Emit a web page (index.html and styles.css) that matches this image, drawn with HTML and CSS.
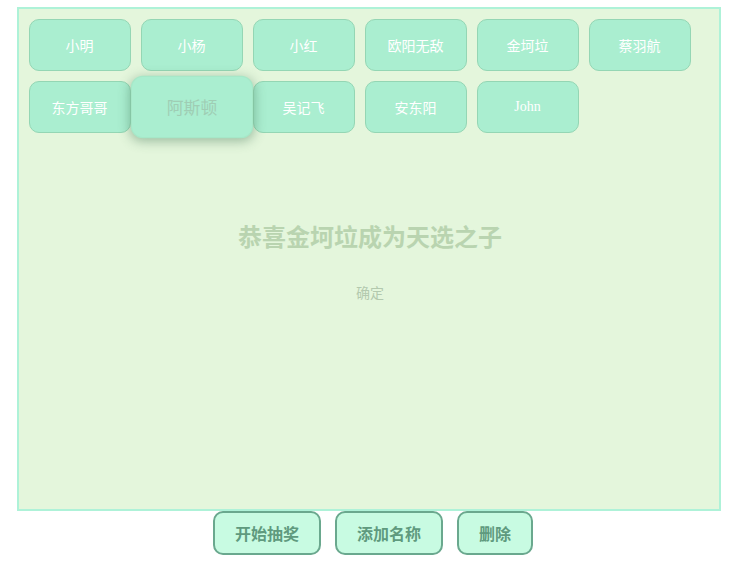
FILE: index.html
```html
<!DOCTYPE html>
<html lang="zh">
<head>
<meta charset="utf-8">
<title>抽奖</title>
<link rel="stylesheet" href="styles.css">
</head>
<body>
<div class="board">
  <div class="names">
    <div class="name">小明</div>
    <div class="name">小杨</div>
    <div class="name">小红</div>
    <div class="name">欧阳无敌</div>
    <div class="name">金坷垃</div>
    <div class="name">蔡羽航</div>
    <div class="name">东方哥哥</div>
    <div class="name active">阿斯顿</div>
    <div class="name">吴记飞</div>
    <div class="name">安东阳</div>
    <div class="name">John</div>
  </div>
  <div class="result">
    <div class="result-title">恭喜金坷垃成为天选之子</div>
    <div class="result-ok">确定</div>
  </div>
</div>
<div class="actions">
  <button class="btn">开始抽奖</button>
  <button class="btn">添加名称</button>
  <button class="btn">删除</button>
</div>
</body>
</html>
```
FILE: styles.css
```css
html, body {
  margin: 0;
  padding: 0;
  background: #ffffff;
  font-family: "Liberation Serif", "Noto Sans CJK SC", serif;
}
body {
  padding-top: 7px;
}
.board {
  margin: 0 auto;
  border: 2px solid #aef2d8;
  background: #e4f6dc;
  padding: 10px;
  box-sizing: border-box;
  width: 704px;
  height: 504px;
}
.names {
  display: flex;
  flex-wrap: wrap;
  gap: 10px;
}
.name {
  width: 102px;
  height: 52px;
  box-sizing: border-box;
  border: 1px solid #94d6b4;
  border-radius: 10px;
  background: #aaeed0;
  color: #ffffff;
  font-size: 14px;
  display: flex;
  align-items: center;
  justify-content: center;
}
.name.active {
  transform: scale(1.2);
  color: #9fcdb4;
  border-color: #a6e8c8;
  box-shadow: 0 2px 10px rgba(60, 110, 80, 0.45);
  position: relative;
  z-index: 1;
}
.result {
  text-align: center;
  margin-top: 86px;
  padding-left: 3px;
}
.result-title {
  font-family: "Noto Sans CJK SC", sans-serif;
  font-weight: bold;
  font-size: 24px;
  line-height: 34px;
  color: #b9d4b0;
}
.result-ok {
  font-family: "Noto Sans CJK SC", sans-serif;
  font-size: 14px;
  line-height: 20px;
  color: #b3c9ae;
  margin-top: 29px;
}
.actions {
  display: flex;
  justify-content: center;
  gap: 14px;
  padding-left: 9px;
}
.btn {
  font-family: "Noto Sans CJK SC", sans-serif;
  font-weight: bold;
  font-size: 16px;
  line-height: 20px;
  padding: 10px 20px;
  height: 44px;
  border: 2px solid #6aa88e;
  border-radius: 10px;
  background: #c8fbe2;
  color: #5f9a7e;
  box-sizing: border-box;
}
```
